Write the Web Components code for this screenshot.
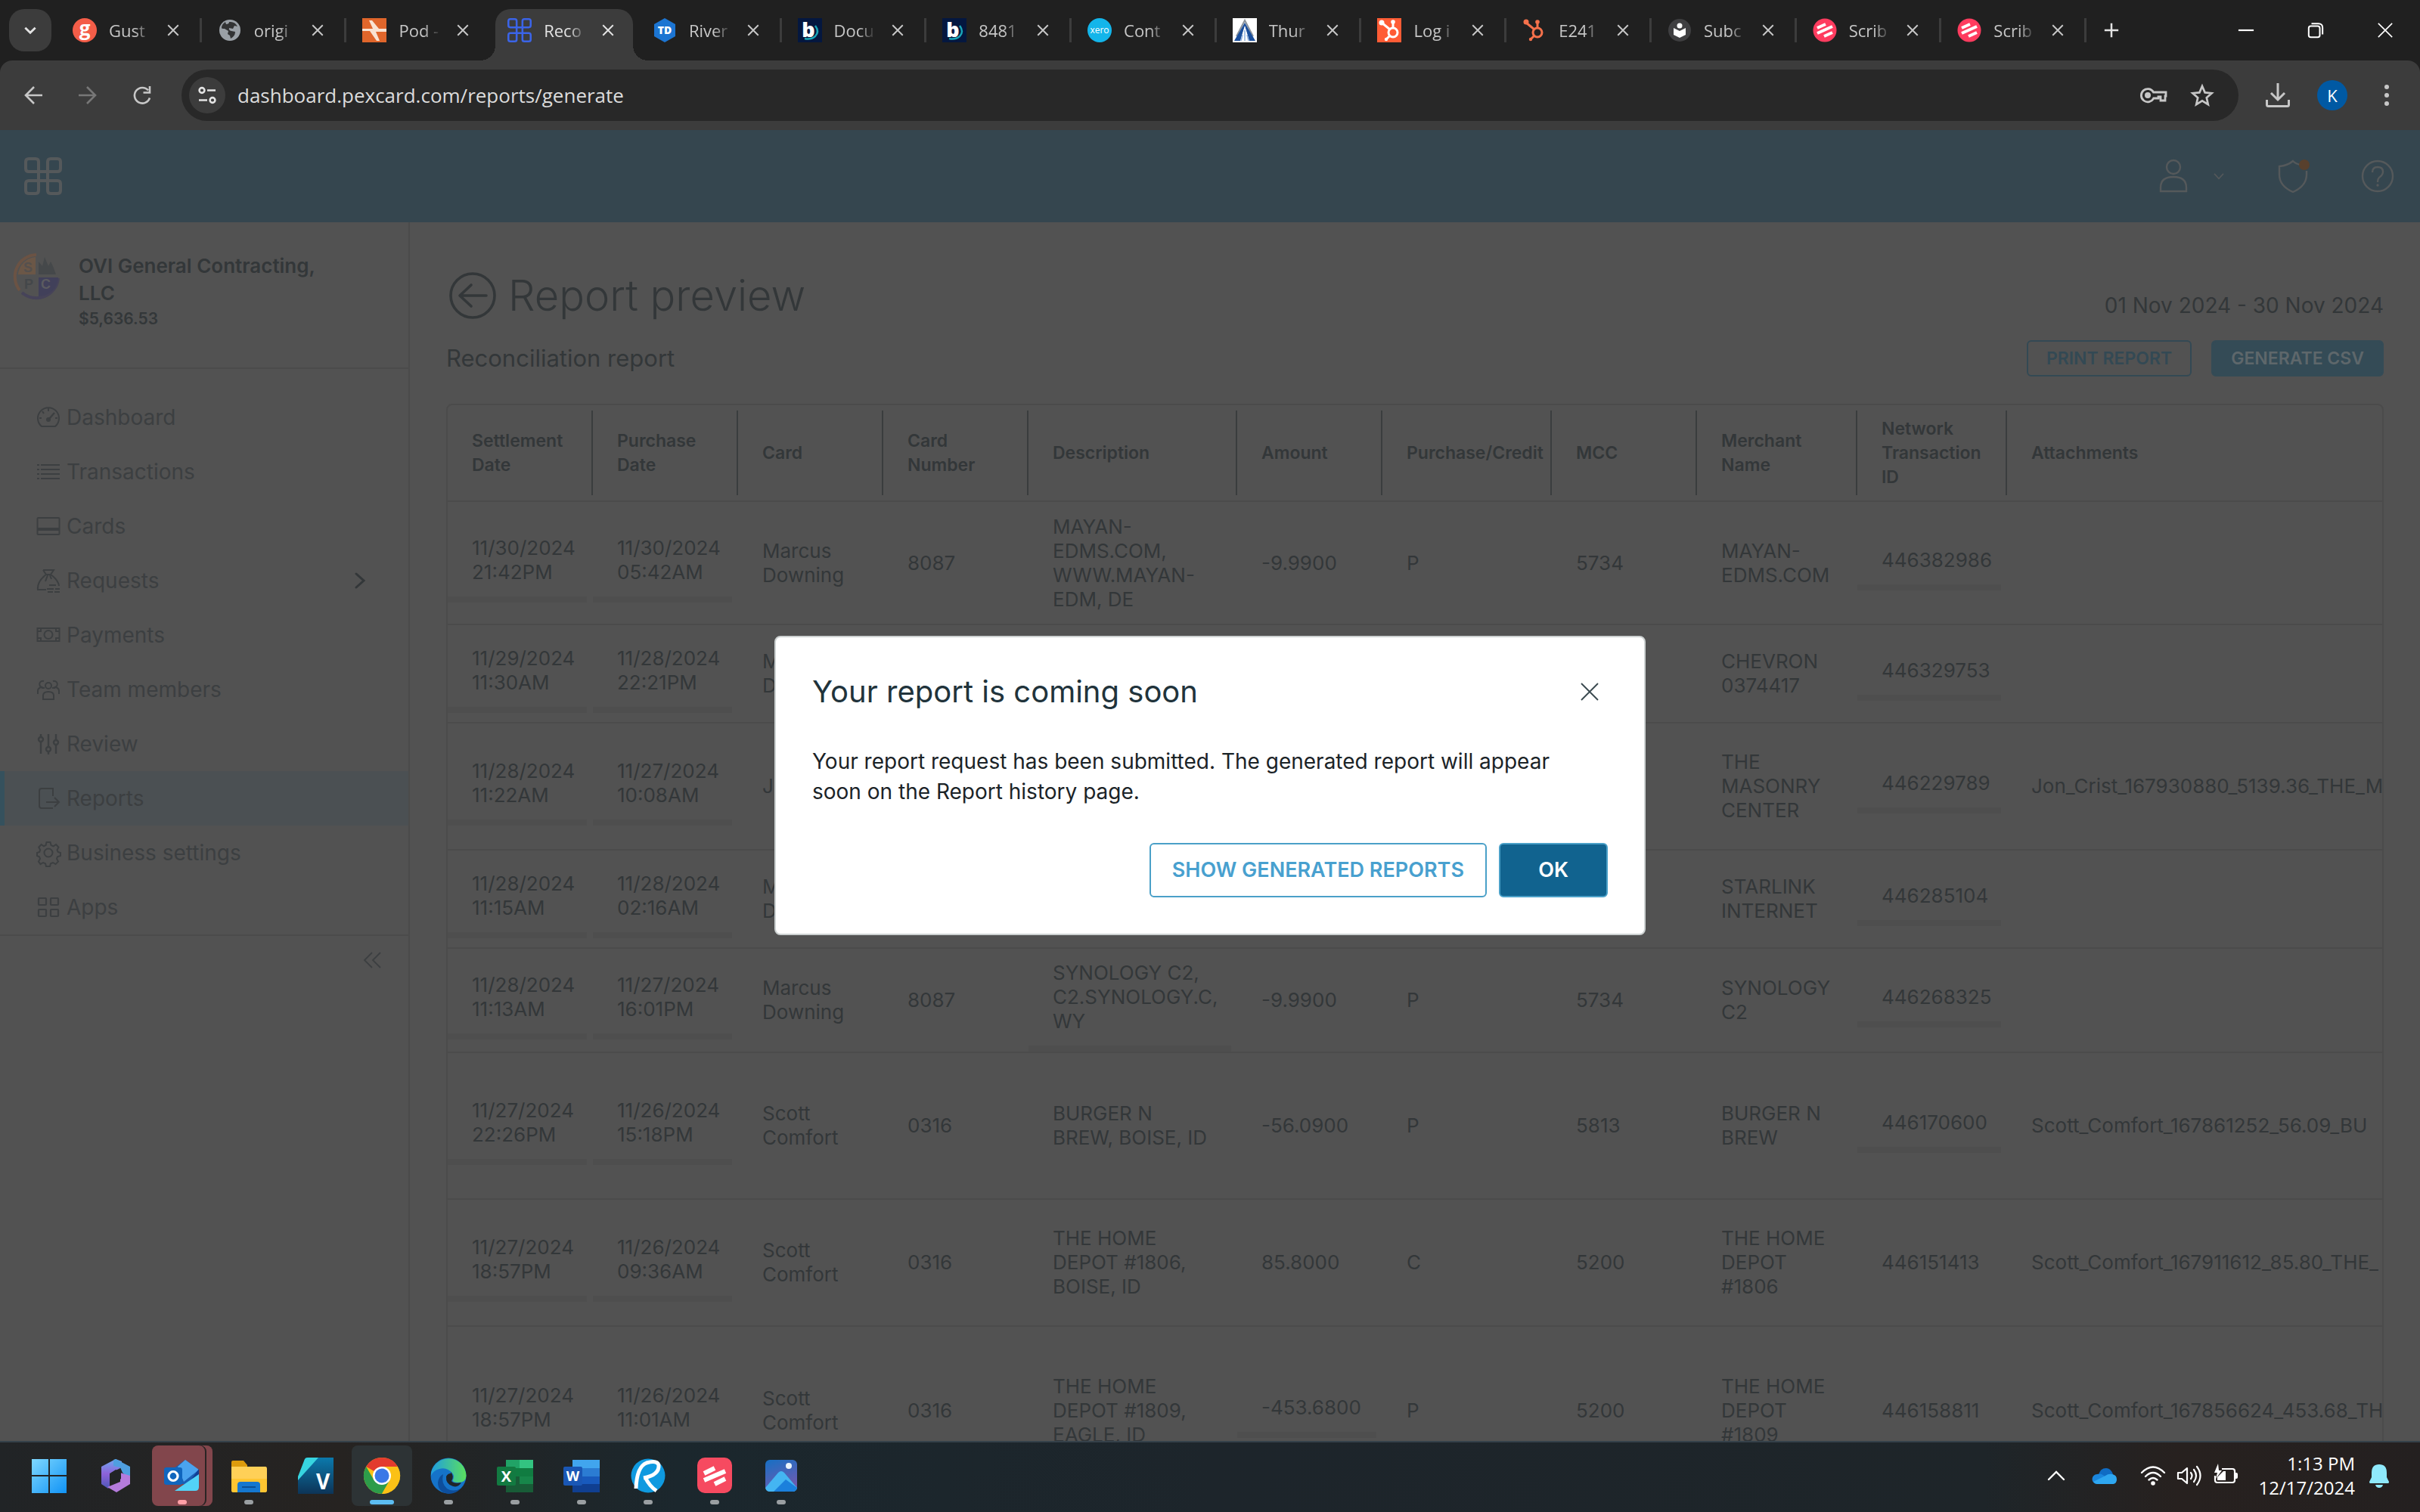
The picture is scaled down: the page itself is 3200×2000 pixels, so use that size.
<!DOCTYPE html>
<html lang="en">
<head>
<meta charset="utf-8">
<title>Reconciliation report</title>
<style>
  html, body { margin: 0; height: 100%; }
  body {
    display: flex;
    flex-direction: column;
    overflow: hidden;
    background: #202020;
    font-family: Inter, sans-serif;
    --system: "Open Sans", "Noto Sans", sans-serif;
    --page: #525252;
    --line: #4b4b4b;
    --ink: #333739;
    --muted: #3c3f41;
    --brand: #35464f;
  }
</style>
</head>
<body>
<browser-tabs></browser-tabs>
<browser-toolbar url="dashboard.pexcard.com/reports/generate"></browser-toolbar>
<app-shell>
  <app-header slot="header"></app-header>
  <side-nav slot="nav"></side-nav>
  <report-page slot="main"></report-page>
  <app-modal slot="overlay" heading="Your report is coming soon">
    Your report request has been submitted. The generated report will appear soon on the Report history page.
    <app-button slot="actions" variant="outline" size="large">SHOW GENERATED REPORTS</app-button>
    <app-button slot="actions" variant="primary" size="large">OK</app-button>
  </app-modal>
</app-shell>
<task-bar></task-bar>

<script>
// name: [viewBox, markup]; stroke icons take currentColor
const S = 'fill="none" stroke="currentColor"';
const ICONS = {
  close: ["0 0 24 24", `<path ${S} stroke-width="2.6" d="M3 3l18 18M21 3L3 21"/>`],
  thinClose: ["0 0 24 24", `<path ${S} stroke-width="1.9" d="M1 1l22 22M23 1L1 23"/>`],
  down: ["0 0 24 24", `<path ${S} stroke-width="3.4" d="M4 8l8 8 8-8"/>`],
  up: ["0 0 24 24", `<path ${S} stroke-width="2.4" stroke-linecap="round" d="M2 17L12 7l10 10"/>`],
  right: ["0 0 24 24", `<path ${S} stroke-width="3" stroke-linecap="round" d="M7 3l10 9-10 9"/>`],
  collapse: ["0 0 24 24", `<path ${S} stroke-width="1.8" d="M12 2L2 12l10 10M23 2L13 12l10 10"/>`],
  plus: ["0 0 24 24", `<path ${S} stroke-width="3" d="M12 1v22M1 12h22"/>`],
  minimize: ["0 0 24 24", `<path ${S} stroke-width="2.4" d="M1 12h22"/>`],
  restore: ["0 0 24 24", `<rect ${S} stroke-width="2.2" x="2" y="6" width="16" height="16" rx="3"/><path ${S} stroke-width="2.2" d="M6 2.4h10q6 0 6 6V18"/>`],
  back: ["0 0 24 24", `<path ${S} stroke-width="2.6" d="M24 12H2M13 1L2 12l11 11"/>`],
  forward: ["0 0 24 24", `<path ${S} stroke-width="2.6" d="M0 12h22M11 1l11 11-11 11"/>`],
  reload: ["0 0 24 24", `<path ${S} stroke-width="2.6" d="M22 15.500A10.300 10.300 0 1 1 20 5.500M22 0v8.500h-8.500"/>`],
  tune: ["0 0 24 24", `<g ${S} stroke-width="2.6"><circle cx="5" cy="5.500" r="3.400"/><path d="M12 5.500h11M1 18.500h11"/><circle cx="19" cy="18.500" r="3.400"/></g>`],
  key: ["0 0 36 24", `<g ${S} stroke-width="2.8"><path d="M17.500 8H34v5h-1v6h-6v-5h-3v2h-6.300A8.600 8.600 0 1 1 17.500 8z"/></g><circle cx="10" cy="12" r="4" fill="currentColor"/>`],
  star: ["0 0 32 32", `<path ${S} stroke-width="2.7" d="M16 4l3.600 8.400 9 .8-6.800 6 2 8.900L16 23.400l-7.800 4.700 2-8.900-6.800-6 9-.8z"/>`],
  download: ["0 0 32 32", `<g ${S} stroke-width="3"><path d="M16 0v21M7 13l9 9 9-9M1.500 22v6.500q0 2 2 2h25q2 0 2-2V22"/></g>`],
  more: ["0 0 32 32", `<g fill="currentColor"><circle cx="16" cy="5" r="3"/><circle cx="16" cy="16" r="3"/><circle cx="16" cy="27" r="3"/></g>`],
  command: ["0 0 50 50", `<path ${S} stroke-width="4" d="M19 19V6q0-4-4-4H6q-4 0-4 4v9q0 4 4 4zM31 19V6q0-4 4-4h9q4 0 4 4v9q0 4-4 4zM19 31v13q0 4-4 4H6q-4 0-4-4v-9q0-4 4-4zM31 31v13q0 4 4 4h9q4 0 4-4v-9q0-4-4-4zM19 19v12M31 19v12M19 19h12M19 31h12"/>`],
  user: ["0 0 44 44", `<g ${S} stroke-width="2.4"><circle cx="22" cy="10" r="9"/><path d="M5 42v-5q0-14 17-14t17 14v5z"/></g>`],
  chevron: ["0 0 24 24", `<path ${S} stroke-width="2.4" d="M3 7l9 10 9-10"/>`],
  shield: ["0 0 44 44", `<path ${S} stroke-width="2.4" d="M32 7q-6-1-10-5Q15 8 4 9v11q0 15 18 23 18-8 18-23v-5"/><circle cx="37" cy="7" r="7" fill="#58402d"/>`],
  help: ["0 0 44 44", `<g ${S} stroke-width="2.4"><circle cx="22" cy="22" r="20"/><path d="M15 17q0-7 7-7t7 6q0 4-4 7-3 2-3 7"/></g><circle cx="22" cy="34" r="1.700" fill="currentColor"/>`],
  backCircle: ["0 0 62 62", `<g ${S} stroke-width="3.600"><circle cx="31" cy="31" r="29"/><path stroke-linecap="round" stroke-linejoin="round" d="M49 31H14M29 17L14 31l15 14"/></g>`],
  dashboard: ["0 0 32 32", `<g ${S} stroke-width="2"><path d="M7 28A14 14 0 1 1 25 28z"/><path d="M16 4v4M4 17h3M25 17h3M8 8l2 3"/><path d="M17 18l7-8" stroke-width="2.400"/></g><circle cx="16" cy="19" r="3" fill="currentColor"/>`],
  list: ["0 0 32 32", `<path ${S} stroke-width="2" d="M6 7h25M6 13h25M6 19h25M6 25h25M1 7h3M1 13h3M1 19h3M1 25h3"/>`],
  card: ["0 0 32 32", `<g ${S} stroke-width="2"><rect x="1.500" y="5" width="29" height="22" rx="1"/><path d="M2 20h28" stroke-width="4"/></g>`],
  bag: ["0 0 32 32", `<g ${S} stroke-width="2"><path d="M9 2h14l-4 6q10 7 11 15M13 8Q1 17 2 28h11M9 2l4 6h6M15 9l-3 8M18 9l2 5"/><path d="M17 22h9M14 27h9M25 27h6M15 31h7M24 31h7" /></g>`],
  cash: ["0 0 32 32", `<g ${S} stroke-width="2"><rect x="1.500" y="7" width="29" height="17"/><circle cx="16" cy="15.500" r="5.500"/><path d="M2 11h4V7M30 11h-4V7M2 20h4v4M30 20h-4v4"/></g>`],
  team: ["0 0 32 32", `<g ${S} stroke-width="2"><circle cx="16" cy="11" r="4"/><path d="M9 29v-5q0-5 7-5t7 5v5zM10 5a4 4 0 1 0-3 8q-5 1-5 5v4M22 5a4 4 0 1 1 3 8q5 1 5 5v4M7 14h4M21 14h4"/></g>`],
  sliders: ["0 0 32 32", `<g ${S} stroke-width="2.400"><path d="M6 3v4M6 13v16M16 3v17M16 26v4M26 3v8M26 17v12"/><circle cx="6" cy="10" r="3"/><circle cx="16" cy="23" r="3"/><circle cx="26" cy="14" r="3"/></g>`],
  export: ["0 0 32 32", `<g ${S} stroke-width="2"><path d="M22 29H7q-3 0-3-3V6q0-3 3-3h15v10M13 21h17M24 15l6 6-6 6"/></g>`],
  gear: ["0 0 32 32", `<g ${S} stroke-width="2"><circle cx="16" cy="16" r="5.500"/><path d="M13.500 2h5l1 4 3 1.300 3.600-2.200 3.400 3.600-2 3.500 1.200 2.800 3.300 1v4l-4 1.200-1 2.800 2 3.600-3.500 3.500-3.500-2.100-3 1.200-1 3.800h-5l-1-3.800-3-1.200-3.500 2.100L3 27.600 5 24l-1-2.800L1 20v-4l3.200-1.100 1-2.700-2-3.500 3.400-3.600L10 7.300 12.600 6z"/></g>`],
  apps: ["0 0 32 32", `<g ${S} stroke-width="2.200"><rect x="3" y="4" width="10" height="9" rx="1"/><rect x="19" y="4" width="10" height="9" rx="1"/><rect x="3" y="19" width="10" height="9" rx="1"/><rect x="19" y="19" width="10" height="9" rx="1"/></g>`],
  company: ["0 0 64 64", `<path d="M32 3A29 29 0 0 0 10 50" ${S} style="stroke:#6b5344" stroke-width="4"/><path d="M61 34A29 29 0 0 1 13 53" ${S} style="stroke:#464359" stroke-width="4"/><path fill="#6b5747" d="M8 29A25 25 0 0 1 31 6v23z"/><path fill="#45484a" d="M35 29V12l5 6 3-12 5 12 3-6 3 6 4 11z"/><path fill="#41405a" d="M35 33h26a26 26 0 0 1-26 25z"/><g font-family="Liberation Sans" font-weight="700" font-size="18" fill="#55504e"><text x="15" y="26">S</text><text x="16" y="48" fill="#44474a">P</text><text x="38" y="48" fill="#5b5b60">C</text></g>`],
  // favicons
  gusto: ["0 0 32 32", `<circle cx="16" cy="16" r="16" fill="#f45d48"/><text x="16" y="23" text-anchor="middle" font-family="Open Sans" font-weight="700" font-size="26" fill="#fff">g</text>`],
  globe: ["0 0 32 32", `<circle cx="16" cy="16" r="14" fill="#9aa0a6"/><path fill="#202020" d="M17 5q6 0 9 6l-4-1-2 4-5-1q-1 3 3 4l5 1q0 6-6 9l-1-4-3-2 1-4-5-3q-4 0-4-1 0-5 5-8l1 3q4 0 4-3z" opacity=".85"/>`],
  podio: ["0 0 32 32", `<path fill="#e0662b" d="M0 0h32v32H0z"/><path fill="#f9e3d2" d="M9 3l4 0 9 11h10v4H18l5 12h-4L10 17H0v-3h14z"/>`],
  hexTd: ["0 0 32 32", `<path fill="#1c75d2" d="M16 0l14 8v16l-14 8L2 24V8z"/><text x="16" y="21" text-anchor="middle" font-family="Open Sans" font-weight="800" font-size="14" fill="#fff">TD</text>`],
  bill: ["0 0 32 32", `<path fill="#04173f" d="M0 0h32v32H0z"/><path fill="none" stroke="#19a6b8" stroke-width="2.400" d="M23 10q6 8 0 14-6 5-14 3"/><text x="14" y="25" text-anchor="middle" font-family="Open Sans" font-weight="800" font-size="27" fill="#fff">b</text>`],
  xero: ["0 0 32 32", `<circle cx="16" cy="16" r="16" fill="#13b5ea"/><text x="16" y="20" text-anchor="middle" font-family="Open Sans" font-size="12" fill="#fff">xero</text>`],
  thunder: ["0 0 32 32", `<path fill="#fff" d="M0 0h32v32H0z"/><path fill="none" stroke="#8b939b" stroke-width="2" d="M5 24L16 3l11 21"/><path fill="#1b4f9c" d="M16 6l14 24H21l-1-6-4-13-4 13-1 6H2z"/><path fill="#fff" d="M16 10l6 20H10z"/><path fill="none" stroke="#8fb1de" stroke-width="1.500" d="M16 16v14M13 22l-2 8M19 22l2 8"/>`],
  hubTile: ["0 0 32 32", `<path fill="#ff5c35" d="M0 0h32v32H0z"/><g fill="none" stroke="#fff" stroke-width="3"><circle cx="21" cy="19" r="6"/><path d="M21 13V5M17 15L6 6M17 23l-5 5"/></g><g fill="#fff"><circle cx="6" cy="6" r="3.500"/><circle cx="21" cy="5" r="2.800"/><circle cx="12" cy="28" r="2.200"/></g>`],
  hub: ["0 0 32 32", `<g fill="none" stroke="#f5714b" stroke-width="3"><circle cx="20" cy="19" r="6"/><path d="M20 13V5M16 15L5 6M16 23l-5 5"/></g><g fill="#f5714b"><circle cx="5" cy="5" r="3.500"/><circle cx="20" cy="5" r="2.800"/><circle cx="11" cy="28" r="2.200"/></g>`],
  reader: ["0 0 32 32", `<circle cx="16" cy="16" r="15" fill="#3f3f41"/><circle cx="16" cy="10" r="3.500" fill="#fff"/><path fill="#fff" d="M8 13l8 4 8-4v9l-8 4-8-4z"/>`],
  scribe: ["0 0 32 32", `<circle cx="16" cy="16" r="15.500" fill="#ff3c5f"/><path ${S} style="stroke:#fff" stroke-width="4" d="M6 13l11-5M6 20l20-9M15 24l11-5"/>`],
  // taskbar
  windows: ["0 0 48 48", `<defs><linearGradient id="g" x2="1" y2="1"><stop stop-color="#7fd8ff"/><stop offset="1" stop-color="#1093f5"/></linearGradient></defs><path fill="url(#g)" d="M1 2h22v21H1zM25 2h22v21H25zM1 25h22v22H1zM25 25h22v22H25z"/>`],
  m365: ["0 0 48 48", `<defs><linearGradient id="g" x2="0" y2="1"><stop stop-color="#6fa8f0"/><stop offset=".5" stop-color="#8d62d9"/><stop offset="1" stop-color="#4d57b8"/></linearGradient></defs><path fill="url(#g)" d="M24 2L5 12v23l9 6 2-2V21l16-8V5z"/><path fill="#4f9fe0" d="M24 2l19 10v17l-10-9-3-7-9-2V3z"/><path fill="#b57bdc" d="M43 24v11L25 46l-12-7 17-7V20z"/><path fill="#212426" d="M18 20l6-4 7 4v8l-7 5-6-4z"/>`],
  outlook: ["0 0 48 48", `<path fill="#1a5fb4" d="M8 18L28 3l18 14v18H8z"/><path fill="#4aa3ee" d="M18 12L28 3l18 13-20 16z"/><path fill="#123f94" d="M46 15v16L26 42z"/><path fill="#52d3f7" d="M14 44l32-22v17q0 5-5 5z"/><rect y="13" width="24" height="23" rx="3" fill="#1066be"/><circle cx="12" cy="24.500" r="6" fill="none" stroke="#fff" stroke-width="3.200"/>`],
  folder: ["0 0 48 48", `<path fill="#dd9b0c" d="M1 6q0-2 2-2h14l5 6v8H1z"/><path fill="#ffd057" d="M1 12h45q2 0 2 3v28q0 3-3 3H4q-3 0-3-3z"/><path fill="#ffc531" d="M1 28h47v15q0 3-3 3H4q-3 0-3-3z"/><path fill="#1577cf" d="M9 46V36q0-4 4-4h22q4 0 4 4v10z"/><path fill="#0b4f94" d="M15 38h18v2H15z"/>`],
  vTile: ["0 0 48 48", `<defs><linearGradient id="g" x2="0" y2="1"><stop stop-color="#0b79ac"/><stop offset="1" stop-color="#0d3457"/></linearGradient></defs><path fill="url(#g)" d="M10 2q1-2 4-2h34v48H1V28z"/><path fill="#37d5e0" d="M10 2q1-2 4-2h14L1 30v-5z"/><text x="34" y="42" text-anchor="middle" font-family="Open Sans" font-weight="700" font-size="28" fill="#fff">V</text>`],
  chrome: ["0 0 48 48", `<circle cx="24" cy="24" r="24" fill="#fbc116"/><path fill="#e33b2e" d="M24 24L3.200 12A24 24 0 0 1 44.800 12H24z"/><path fill="#2d9c4a" d="M3.200 12A24 24 0 0 0 24 48l10.400-18L24 24 13.600 30z"/><path fill="#fbc116" d="M24 12h20.800A24 24 0 0 1 24 48l10.400-18z"/><circle cx="24" cy="24" r="12" fill="#fff"/><circle cx="24" cy="24" r="9.500" fill="#3b78e7"/>`],
  edge: ["0 0 48 48", `<defs><linearGradient id="g" x2="1"><stop stop-color="#1f9de0"/><stop offset="1" stop-color="#5be05e"/></linearGradient></defs><circle cx="24" cy="24" r="23.500" fill="#1573c9"/><path fill="url(#g)" d="M1 20A23.500 23.500 0 0 1 47.500 24q0 9-11 9-7 0-7-3 3-5 0-9Q22 12 12 15 4 17 1 24z"/><path fill="#0d4e9c" d="M17 22q-3 12 5 19 8 5 18 0-6 7-16 7Q10 46 10 33q1-8 7-11z"/><path fill="#202529" d="M27 19q5 6 1 12 3 4 13 2-4 7-11 5-10-3-9-13 2-4 6-4z"/>`],
  excel: ["0 0 48 48", `<path fill="#21a366" d="M12 3h36v11H12z"/><path fill="#33c481" d="M30 3h18v11H30z"/><path fill="#107c41" d="M12 14h36v11H12z"/><path fill="#17864a" d="M30 25h18v10H30z"/><path fill="#185c37" d="M12 25h18v10H12zM12 35h36v11H12z"/><rect y="12" width="25" height="25" rx="2" fill="#127a41"/><text x="12.500" y="32" text-anchor="middle" font-family="Open Sans" font-weight="700" font-size="20" fill="#fff">X</text>`],
  word: ["0 0 48 48", `<path fill="#41a5ee" d="M12 3h36v11H12z"/><path fill="#2b7cd3" d="M12 14h36v11H12z"/><path fill="#185abd" d="M12 25h36v10H12z"/><path fill="#103f91" d="M12 35h36v11H12z"/><rect y="12" width="25" height="25" rx="2" fill="#1a57b5"/><text x="12.500" y="31" text-anchor="middle" font-family="Open Sans" font-weight="700" font-size="18" fill="#fff">W</text>`],
  ringR: ["0 0 48 48", `<circle cx="24" cy="24" r="22.500" fill="#0f9ae0"/><path fill="none" stroke="#fff" stroke-width="5" d="M8 41Q9 12 22 7q14-4 16 3 1 13-20 17M20 26q6 12 15 18"/>`],
  scribeTile: ["0 0 48 48", `<rect x="1" width="46" height="47" rx="10" fill="#f64a60"/><path fill="none" stroke="#fff" stroke-width="6" d="M10 21l14-7M10 30l28-12M24 35l14-7"/>`],
  photos: ["0 0 48 48", `<defs><linearGradient id="g" x2="0.400" y2="1"><stop stop-color="#1670c4"/><stop offset="1" stop-color="#6c5bb0"/></linearGradient></defs><rect x="3" y="3" width="42" height="42" rx="6" fill="url(#g)"/><path fill="#44b5f2" d="M3 40l17-20q4-4 8 0l17 20q-1 5-6 5H9q-5 0-6-5z"/><path fill="#1b80dc" d="M14 45l16-16 15 11q-1 5-6 5z"/><circle cx="34" cy="11" r="4" fill="#e9f4fb"/>`],
  cloud: ["0 0 32 32", `<path fill="#0f6cc4" d="M8 15q2-9 10-9 6 0 9 8l-6 10z"/><path fill="#1a86dd" d="M6 27a6.500 6.500 0 0 1 0-13q6-2 10 3l9 9z"/><path fill="#2ea7f0" d="M6 27q-3 0-5-3l16-8q4-3 9-2 6 1 6 7 0 6-6 6z"/>`],
  wifi: ["0 0 32 32", `<g ${S} stroke-width="2.400" stroke-linecap="round"><path d="M1 12q15-15 30 0M6 17q10-10 20 0M10.500 21.500q5.500-5 11 0"/></g><circle cx="16" cy="26" r="2.800" fill="currentColor"/>`],
  volume: ["0 0 32 32", `<g ${S} stroke-width="2.200" stroke-linejoin="round" stroke-linecap="round"><path d="M1 12v8h5l7 6V6l-7 6zM18 12q3 4 0 8M22 8q6 8 0 16M26 4q9 12 0 24"/></g>`],
  battery: ["0 0 32 32", `<g ${S} stroke-width="2.200"><path d="M11 7h14q3 0 3 3v12q0 3-3 3H5q-3 0-3-3v-6"/></g><path fill="currentColor" d="M28 12h2q2 0 2 2v4q0 2-2 2h-2zM5 18l8-8h3v12H5zM6 0L1 12h4l-2 8 8-11H7z"/>`],
  bell: ["0 0 32 32", `<path fill="#8fe9fb" d="M16 1q10 0 10 11v6l3 6q0 2-1 2H4q-1 0-1-2l3-6v-6Q6 1 16 1zM11 28h10q-1 4-5 4t-5-4z"/>`]
};

class UiIcon extends HTMLElement {
  connectedCallback() {
    const [box, body] = ICONS[this.getAttribute("name")];
    const size = this.getAttribute("size") || 24;
    const root = this.attachShadow({ mode: "open" });
    root.innerHTML = `
      <style>
        :host { display: inline-flex; flex: none; }
        svg { display: block; height: ${size}px; overflow: visible; }
      </style>
      <svg viewBox="${box}" aria-hidden="true">${body}</svg>
    `;
  }
}
customElements.define("ui-icon", UiIcon);

class AppButton extends HTMLElement {
  connectedCallback() {
    this.attachShadow({ mode: "open" }).innerHTML = `
      <style>
        :host { display: inline-flex; }
        button {
          font: 600 23px/44px Inter, sans-serif;
          padding: 0 24px;
          border: 2px solid #334954;
          border-radius: 6px;
          background: transparent;
          color: #334954;
          white-space: nowrap;
        }
        :host([variant="primary"]) button { background: #344b56; border-color: #344b56; color: #5e676b; }
        :host([size="large"]) button {
          font-size: 27px;
          line-height: 68px;
          min-width: 144px;
          padding: 0 28px;
          border-color: #4aa0c8;
          color: #48a0cf;
        }
        :host([size="large"][variant="primary"]) button { background: #11638f; color: #fff; }
      </style>
      <button type="button"><slot></slot></button>
    `;
  }
}
customElements.define("app-button", AppButton);

class BrowserTab extends HTMLElement {
  connectedCallback() {
    this.attachShadow({ mode: "open" }).innerHTML = `
      <style>
        :host { display: block; flex: 0 1 192px; min-width: 0; height: 68px; color: #c7c7c7; }
        .tab { position: relative; display: flex; align-items: center; height: 56px; padding: 0 14px 0 16px; gap: 16px; }
        .tab::after { content: ""; position: absolute; right: 5px; top: 12px; width: 3px; height: 32px; background: #3c3c3c; }
        :host([nosep]) .tab::after { display: none; }
        button { all: unset; }
        .title {
          flex: 1;
          font: 22px/32px var(--system);
          overflow: hidden;
          white-space: nowrap;
          mask-image: linear-gradient(90deg, #000 60%, transparent);
        }
        .close { display: flex; padding: 0 20px 0 4px; }
        :host([active]) .tab { height: 68px; width: 182px; box-sizing: border-box; background: #3c3c3c; border-radius: 20px 20px 0 0; color: #e3e3e3; padding-bottom: 12px; padding-right: 4px; }
        :host([active]) .tab > ui-icon { color: #3b64e8; }
        :host([active]) .tab::before, :host([active]) .tab::after {
          content: ""; display: block; position: absolute; top: auto; bottom: 0; width: 20px; height: 20px;
        }
        :host([active]) .tab::before { left: -20px; background: radial-gradient(circle at 0 0, transparent 20px, #3c3c3c 20px); }
        :host([active]) .tab::after { right: -20px; background: radial-gradient(circle at 100% 0, transparent 20px, #3c3c3c 20px); }
      </style>
      <div class="tab">
        <ui-icon name="${this.getAttribute("icon")}" size="32"></ui-icon>
        <button class="title" role="tab"><slot></slot></button>
        <button class="close" aria-label="Close tab"><ui-icon name="close" size="18"></ui-icon></button>
      </div>
    `;
  }
}
customElements.define("browser-tab", BrowserTab);

const TABS = [
  ["gusto", "Gust", ""], ["globe", "origi", ""], ["podio", "Pod -", "nosep"], ["command", "Reco", "active"],
  ["hexTd", "River", ""], ["bill", "Docu", ""], ["bill", "8481", ""], ["xero", "Cont", ""], ["thunder", "Thur", ""],
  ["hubTile", "Log i", ""], ["hub", "E241", ""], ["reader", "Subc", ""], ["scribe", "Scrib", ""], ["scribe", "Scrib", ""]
];

class BrowserTabs extends HTMLElement {
  connectedCallback() {
    this.attachShadow({ mode: "open" }).innerHTML = `
      <style>
        :host { display: flex; height: 80px; flex: none; background: #202020; color: #e3e3e3; }
        button { all: unset; display: flex; align-items: center; justify-content: center; }
        .search { width: 56px; height: 56px; margin: 12px; border-radius: 20px; background: #3c3c3c; }
        .tabs { display: flex; flex: 0 1 2684px; padding-top: 12px; }
        .add { width: 56px; }
        .window { display: flex; margin-left: auto; color: #fff; }
        .window button { width: 92px; }
      </style>
      <button class="search" aria-label="Search tabs"><ui-icon name="down" size="20"></ui-icon></button>
      <div class="tabs" role="tablist">
        ${TABS.map(([icon, title, flag]) => `<browser-tab icon="${icon}" ${flag}>${title}</browser-tab>`).join("")}
      </div>
      <button class="add" aria-label="New tab"><ui-icon name="plus" size="20"></ui-icon></button>
      <div class="window">
        <button aria-label="Minimize"><ui-icon name="minimize" size="22"></ui-icon></button>
        <button aria-label="Restore"><ui-icon name="restore" size="22"></ui-icon></button>
        <button aria-label="Close"><ui-icon name="thinClose" size="20"></ui-icon></button>
      </div>
    `;
  }
}
customElements.define("browser-tabs", BrowserTabs);

class BrowserToolbar extends HTMLElement {
  connectedCallback() {
    this.attachShadow({ mode: "open" }).innerHTML = `
      <style>
        :host {
          display: flex; flex: none; align-items: center; box-sizing: border-box; height: 92px;
          padding: 0 8px; background: #3c3c3c; color: #c7c7c7; border-radius: 16px 16px 0 0;
        }
        button { all: unset; display: flex; align-items: center; justify-content: center; width: 72px; }
        .off { color: #777; }
        .bar { display: flex; flex: 1; align-items: center; gap: 16px; height: 68px; margin: 0 16px; padding: 0 24px 0 10px; border-radius: 34px; background: #282828; }
        .site { width: 48px; height: 48px; border-radius: 50%; background: #3c3c3c; color: #e3e3e3; }
        input { flex: 1; border: 0; padding: 0; background: none; color: #dcdcdc; font: 26px/40px var(--system); }
        .bar .act { width: 48px; }
        .avatar { width: 40px; height: 40px; margin: 0 16px; border-radius: 50%; background: #0059a3; color: #fff; font: 22px/40px var(--system); }
      </style>
      <button aria-label="Back"><ui-icon name="back" size="24"></ui-icon></button>
      <button class="off" aria-label="Forward"><ui-icon name="forward" size="24"></ui-icon></button>
      <button aria-label="Reload"><ui-icon name="reload" size="24"></ui-icon></button>
      <div class="bar">
        <button class="site" aria-label="Site information"><ui-icon name="tune" size="24"></ui-icon></button>
        <input type="text" aria-label="Address" value="${this.getAttribute("url")}">
        <button class="act" aria-label="Passwords"><ui-icon name="key" size="24"></ui-icon></button>
        <button class="act" aria-label="Bookmark"><ui-icon name="star" size="32"></ui-icon></button>
      </div>
      <button aria-label="Downloads"><ui-icon name="download" size="32"></ui-icon></button>
      <button class="avatar" aria-label="Profile">K</button>
      <button aria-label="Menu"><ui-icon name="more" size="32"></ui-icon></button>
    `;
  }
}
customElements.define("browser-toolbar", BrowserToolbar);

class AppShell extends HTMLElement {
  connectedCallback() {
    this.attachShadow({ mode: "open" }).innerHTML = `
      <style>
        :host { position: relative; display: flex; flex-direction: column; flex: 1; min-height: 0; overflow: hidden; background: var(--page); }
        .body { display: flex; flex: 1; min-height: 0; }
        .overlay { position: absolute; inset: 0; display: flex; align-items: center; justify-content: center; }
      </style>
      <slot name="header"></slot>
      <div class="body"><slot name="nav"></slot><slot name="main"></slot></div>
      <div class="overlay"><slot name="overlay"></slot></div>
    `;
  }
}
customElements.define("app-shell", AppShell);

class AppHeader extends HTMLElement {
  connectedCallback() {
    this.attachShadow({ mode: "open" }).innerHTML = `
      <style>
        :host { display: flex; flex: none; align-items: center; height: 122px; padding: 0 34px 0 32px; background: var(--brand); color: #55595b; }
        a { display: flex; color: inherit; }
        button { all: unset; display: flex; align-items: center; }
        .user { gap: 30px; margin-left: auto; }
        .alerts { margin: 0 68px; }
      </style>
      <a href="#" aria-label="Home"><ui-icon name="command" size="50"></ui-icon></a>
      <button class="user" aria-label="Account"><ui-icon name="user" size="44"></ui-icon><ui-icon name="chevron" size="16"></ui-icon></button>
      <button class="alerts" aria-label="Alerts"><ui-icon name="shield" size="44"></ui-icon></button>
      <button aria-label="Help"><ui-icon name="help" size="44"></ui-icon></button>
    `;
  }
}
customElements.define("app-header", AppHeader);

class NavItem extends HTMLElement {
  connectedCallback() {
    this.attachShadow({ mode: "open" }).innerHTML = `
      <style>
        :host { display: block; }
        a {
          display: flex; align-items: center; gap: 8px; height: 72px; padding: 0 52px 0 42px;
          border-left: 6px solid transparent; color: var(--muted); text-decoration: none; font-size: 28px;
        }
        :host([current]) a { background: #4b5053; border-color: #35515d; }
        .more { margin-left: auto; color: var(--ink); }
      </style>
      <a href="#">
        <ui-icon name="${this.getAttribute("icon")}" size="32"></ui-icon>
        <slot></slot>
        ${this.hasAttribute("expandable") ? `<ui-icon class="more" name="right" size="24"></ui-icon>` : ""}
      </a>
    `;
  }
}
customElements.define("nav-item", NavItem);

class SideNav extends HTMLElement {
  connectedCallback() {
    this.attachShadow({ mode: "open" }).innerHTML = `
      <style>
        :host { display: block; flex: none; box-sizing: border-box; width: 542px; border-right: 2px solid var(--line); color: var(--ink); }
        .company { display: flex; box-sizing: border-box; gap: 24px; height: 194px; padding: 40px 96px 0 16px; border-bottom: 2px solid var(--line); }
        .company ui-icon { width: 64px; }
        .name { font-weight: 600; font-size: 26px; line-height: 36px; }
        .balance { font-weight: 600; font-size: 21px; line-height: 32px; }
        nav { padding-top: 28px; border-bottom: 2px solid var(--line); }
        button { all: unset; display: flex; margin: 20px 36px 0 auto; color: var(--muted); }
      </style>
      <div class="company">
        <ui-icon name="company" size="64"></ui-icon>
        <div>
          <div class="name">OVI General Contracting, LLC</div>
          <div class="balance">$5,636.53</div>
        </div>
      </div>
      <nav>
        <nav-item icon="dashboard">Dashboard</nav-item>
        <nav-item icon="list">Transactions</nav-item>
        <nav-item icon="card">Cards</nav-item>
        <nav-item icon="bag" expandable>Requests</nav-item>
        <nav-item icon="cash">Payments</nav-item>
        <nav-item icon="team">Team members</nav-item>
        <nav-item icon="sliders">Review</nav-item>
        <nav-item icon="export" current>Reports</nav-item>
        <nav-item icon="gear">Business settings</nav-item>
        <nav-item icon="apps">Apps</nav-item>
      </nav>
      <button aria-label="Collapse menu"><ui-icon name="collapse" size="24"></ui-icon></button>
    `;
  }
}
customElements.define("side-nav", SideNav);

const COLUMNS = [
  ["Settlement\nDate", 192], ["Purchase\nDate", 192], ["Card", 192], ["Card\nNumber", 192], ["Description", 276],
  ["Amount", 192], ["Purchase/Credit", 224], ["MCC", 192], ["Merchant\nName", 212], ["Network\nTransaction\nID", 198], ["Attachments", 0]
];

// height, cells; a leading "~" marks a cell that shows its scroll track
const ROWS = [
  [163, ["~11/30/2024\n21:42PM", "~11/30/2024\n05:42AM", "Marcus\nDowning", "8087", "MAYAN-\nEDMS.COM,\nWWW.MAYAN-\nEDM, DE", "-9.9900", "P", "5734", "MAYAN-\nEDMS.COM", "~446382986", ""]],
  [130, ["~11/29/2024\n11:30AM", "~11/28/2024\n22:21PM", "M\nD", "", "", "", "", "", "CHEVRON\n0374417", "~446329753", ""]],
  [168, ["~11/28/2024\n11:22AM", "~11/27/2024\n10:08AM", "J", "", "", "", "", "", "THE\nMASONRY\nCENTER", "~446229789", "Jon_Crist_167930880_5139.36_THE_M"]],
  [130, ["~11/28/2024\n11:15AM", "~11/28/2024\n02:16AM", "M\nD", "", "", "", "", "", "STARLINK\nINTERNET", "~446285104", ""]],
  [136, ["~11/28/2024\n11:13AM", "~11/27/2024\n16:01PM", "Marcus\nDowning", "8087", "~SYNOLOGY C2,\nC2.SYNOLOGY.C,\nWY", "-9.9900", "P", "5734", "SYNOLOGY\nC2", "~446268325", ""]],
  [194, ["~11/27/2024\n22:26PM", "~11/26/2024\n15:18PM", "Scott\nComfort", "0316", "BURGER N\nBREW, BOISE, ID", "-56.0900", "P", "5813", "BURGER N\nBREW", "~446170600", "Scott_Comfort_167861252_56.09_BU"]],
  [168, ["~11/27/2024\n18:57PM", "~11/26/2024\n09:36AM", "Scott\nComfort", "0316", "THE HOME\nDEPOT #1806,\nBOISE, ID", "85.8000", "C", "5200", "THE HOME\nDEPOT\n#1806", "446151413", "Scott_Comfort_167911612_85.80_THE_"]],
  [224, ["~11/27/2024\n18:57PM", "~11/26/2024\n11:01AM", "Scott\nComfort", "0316", "THE HOME\nDEPOT #1809,\nEAGLE, ID", "~-453.6800", "P", "5200", "THE HOME\nDEPOT\n#1809", "446158811", "Scott_Comfort_167856624_453.68_TH"]]
];

class ReportTable extends HTMLElement {
  connectedCallback() {
    const cell = (text) => text.startsWith("~")
      ? `<td><div class="scroll">${text.slice(1)}</div></td>`
      : `<td><div>${text}</div></td>`;

    this.attachShadow({ mode: "open" }).innerHTML = `
      <style>
        :host { display: block; overflow: hidden; border: 2px solid var(--line); border-radius: 8px; color: var(--ink); }
        table { width: 100%; table-layout: fixed; border-spacing: 0; }
        th, td { padding: 0; border-bottom: 2px solid var(--line); text-align: left; vertical-align: middle; }
        th { height: 126px; font-weight: 600; font-size: 23px; line-height: 32px; white-space: pre; }
        th div { display: flex; align-items: center; height: 112px; padding-left: 32px; border-right: 2px solid #3a3d3e; }
        th:last-child div { border: 0; }
        td div { padding: 0 0 0 32px; font-size: 26px; line-height: 32px; white-space: pre; }
        td .scroll { position: relative; padding: 16px 0 24px 32px; }
        td .scroll::after { content: ""; position: absolute; left: 0; right: 8px; bottom: 0; height: 8px; background: #4e4e4e; }
      </style>
      <table>
        <colgroup>${COLUMNS.map(([, width]) => `<col ${width ? `style="width: ${width}px"` : ""}>`).join("")}</colgroup>
        <thead><tr>${COLUMNS.map(([name]) => `<th scope="col"><div>${name}</div></th>`).join("")}</tr></thead>
        <tbody>
          ${ROWS.map(([height, cells]) => `<tr style="height: ${height}px">${cells.map(cell).join("")}</tr>`).join("")}
        </tbody>
      </table>
    `;
  }
}
customElements.define("report-table", ReportTable);

class ReportPage extends HTMLElement {
  connectedCallback() {
    this.attachShadow({ mode: "open" }).innerHTML = `
      <style>
        :host { display: block; flex: 1; min-width: 0; overflow: hidden; padding: 64px 48px 0; color: var(--ink); }
        .row { display: flex; align-items: center; }
        .head { align-items: flex-end; justify-content: space-between; margin-bottom: 26px; }
        .back { all: unset; display: flex; padding: 0 16px 0 4px; }
        h1 { margin: 0; font-weight: 300; font-size: 56px; line-height: 66px; }
        h2 { margin: 0 auto 0 0; font-weight: 400; font-size: 31px; line-height: 48px; }
        .range { font-size: 28px; line-height: 40px; }
        .actions { gap: 26px; }
        report-table { margin-top: 36px; }
      </style>
      <div class="row head">
        <div class="row">
          <button class="back" aria-label="Back"><ui-icon name="backCircle" size="62"></ui-icon></button>
          <h1>Report preview</h1>
        </div>
        <div class="range">01 Nov 2024 - 30 Nov 2024</div>
      </div>
      <div class="row actions">
        <h2>Reconciliation report</h2>
        <app-button variant="outline">PRINT REPORT</app-button>
        <app-button variant="primary">GENERATE CSV</app-button>
      </div>
      <report-table></report-table>
    `;
  }
}
customElements.define("report-page", ReportPage);

class AppModal extends HTMLElement {
  connectedCallback() {
    this.attachShadow({ mode: "open" }).innerHTML = `
      <style>
        :host {
          display: flex; flex-direction: column; gap: 48px; box-sizing: border-box; width: 1152px; max-width: 90%;
          padding: 48px; border: 2px solid #ccd1d1; border-radius: 8px; background: #fff; color: #21333b;
        }
        header { display: flex; justify-content: space-between; height: 48px; }
        h3 { margin: 0; font-weight: 400; font-size: 40px; line-height: 48px; }
        .close { all: unset; display: flex; align-items: center; justify-content: center; width: 48px; color: #3b4a50; }
        p { margin: 0; padding-right: 24px; font-size: 28px; line-height: 40px; color: #1b2327; }
        footer { display: flex; justify-content: flex-end; gap: 16px; }
      </style>
      <header>
        <h3>${this.getAttribute("heading")}</h3>
        <button class="close" aria-label="Close"><ui-icon name="thinClose" size="24"></ui-icon></button>
      </header>
      <p><slot></slot></p>
      <footer><slot name="actions"></slot></footer>
    `;
  }
}
customElements.define("app-modal", AppModal);

const APPS = [
  ["windows", "Start", ""], ["m365", "Microsoft 365", ""], ["outlook", "Outlook", "alert open"], ["folder", "File Explorer", "open"],
  ["vTile", "V", ""], ["chrome", "Chrome", "active open"], ["edge", "Edge", "open"], ["excel", "Excel", "open"],
  ["word", "Word", "open"], ["ringR", "R", "open"], ["scribeTile", "Scribe", "open"], ["photos", "Photos", "open"]
];

class TaskBar extends HTMLElement {
  connectedCallback() {
    this.attachShadow({ mode: "open" }).innerHTML = `
      <style>
        :host {
          display: flex; flex: none; align-items: center; box-sizing: border-box; height: 94px; padding: 0 38px 4px 25px; color: #fff;
          background: linear-gradient(90deg, #212426, #262321 14%, #1b272d 28%, #1d252b 50%, #1e2529 82%, #27211f 90%, #242020);
          border-top: 2px solid #35414a;
        }
        button { all: unset; display: flex; align-items: center; justify-content: center; }
        .apps { display: flex; gap: 8px; }
        .apps button { position: relative; width: 80px; height: 80px; border-radius: 8px; }
        .apps .active { background: #2d3335; }
        .apps .alert { background: #82464c; box-shadow: inset -8px 0 #82464c, inset -10px 0 #2a2424; }
        .open::after { content: ""; position: absolute; left: 34px; bottom: 2px; width: 12px; height: 6px; border-radius: 3px; background: #9a9fa2; }
        .alert::after { background: #ff9fa6; }
        .active::after { left: 24px; width: 32px; background: #5cbdf2; }
        .tray { display: flex; align-items: center; gap: 16px; margin-left: auto; }
        .up { margin-right: 20px; }
        .cloud { margin-right: 16px; }
        .clock { margin-left: 12px; font: 24px/32px var(--system); text-align: right; }
      </style>
      <div class="apps">
        ${APPS.map(([icon, name, cls]) => `<button class="${cls}" aria-label="${name}"><ui-icon name="${icon}" size="48"></ui-icon></button>`).join("")}
      </div>
      <div class="tray">
        <button class="up" aria-label="Hidden icons"><ui-icon name="up" size="24"></ui-icon></button>
        <button class="cloud" aria-label="OneDrive"><ui-icon name="cloud" size="32"></ui-icon></button>
        <ui-icon name="wifi" size="32"></ui-icon>
        <ui-icon name="volume" size="32"></ui-icon>
        <ui-icon name="battery" size="32"></ui-icon>
        <div class="clock"><div>1:13 PM</div><div>12/17/2024</div></div>
        <ui-icon name="bell" size="32"></ui-icon>
      </div>
    `;
  }
}
customElements.define("task-bar", TaskBar);
</script>
</body>
</html>
